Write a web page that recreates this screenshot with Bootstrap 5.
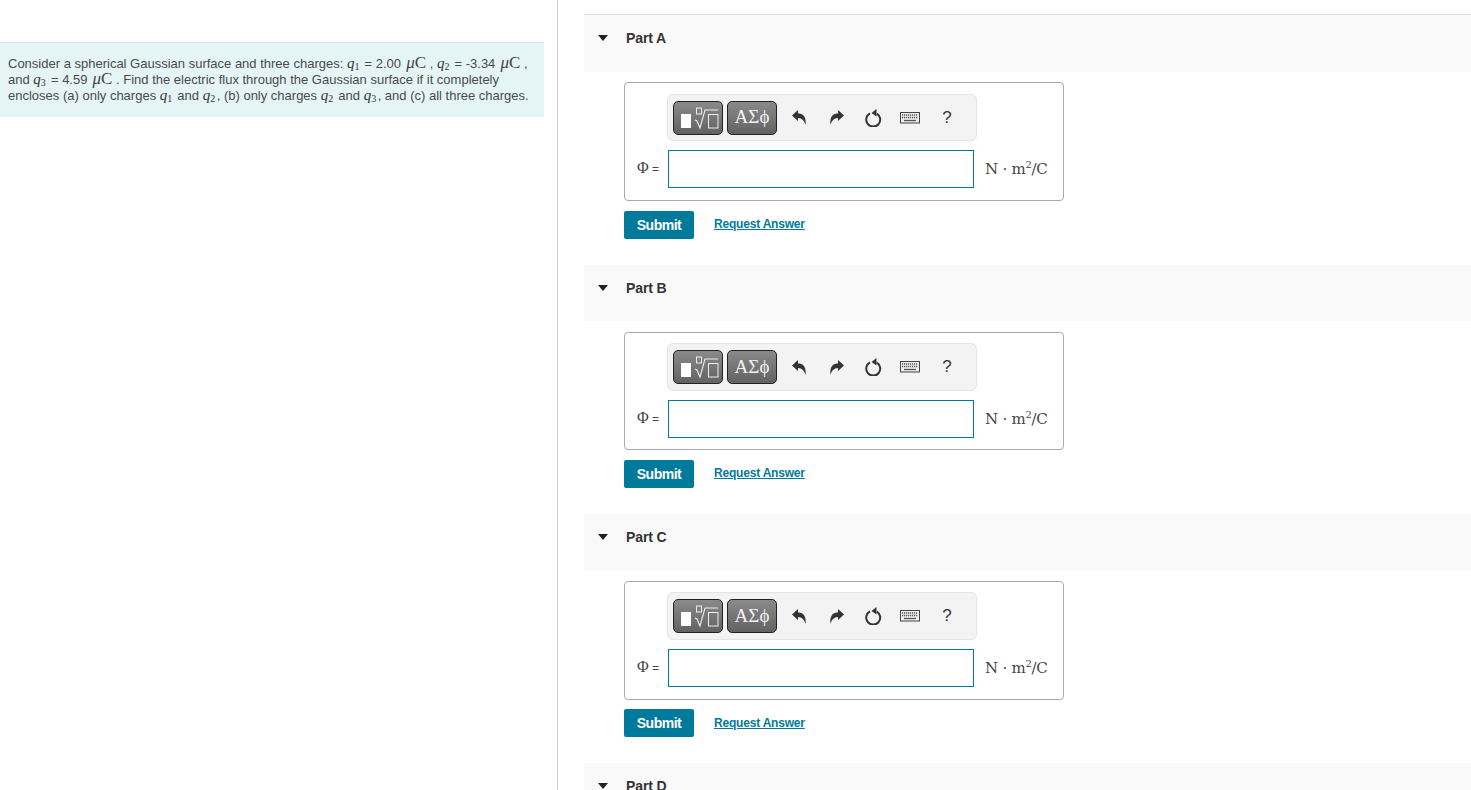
<!DOCTYPE html>
<html lang="en"><head><meta charset="utf-8"><title>Gaussian surface</title>
<link href="https://cdn.jsdelivr.net/npm/bootstrap@5.3.0/dist/css/bootstrap.min.css" rel="stylesheet">
<style>
html,body{height:790px;overflow:hidden;background:#fff}
body{font-family:"Liberation Sans",Arial,sans-serif;color:#444;font-size:12px}
.lay{height:790px}
.leftcol{width:558px;flex:none;border-right:1px solid #c6ccd0;padding-top:42px;padding-right:13px}
.prob{background:#e5f5f6;border-top:1px solid #d7e2e4;height:75px;padding:13px 0 0 8px;font-size:13px;line-height:16px;color:#4a4a4a;white-space:nowrap}
.mi{font-family:"Liberation Serif",serif;font-style:italic;font-size:15px;color:#333;line-height:0;padding-right:1.5px}
.mi sub{font-style:normal;font-size:10px;bottom:-.2em;line-height:0}
.mu{font-family:"Liberation Serif",serif;font-size:17px;color:#444;line-height:0;padding-left:1.5px}
.rightcol{flex:1;padding:14px 0 0 26px;min-width:0}
.parthd{height:56px;background:#f9f9f9;display:flex;padding:14px 0 0 14px;font-weight:700;font-size:14px;line-height:18px;color:#333;letter-spacing:-.1px}
.parthd.firsthd{height:58px;border-top:1px solid #dcdcdc;padding-top:14px}
.tri{width:0;height:0;border-left:5.5px solid transparent;border-right:5.5px solid transparent;border-top:6px solid #222;margin:6px 18px 0 0}
.ansbox{width:440px;height:118px;margin:11px 0 10px 40px;border:1px solid #aaa;border-radius:4px;padding:10px 0 0 11px}
.firsthd + .ansbox{height:119px;margin-top:10px;padding-top:11px}
.tbar{width:310px;height:48px;margin-left:31px;background:#f3f3f3;border:1px solid #e4e4e4;border-radius:6px;padding:5px 5px;display:flex;align-items:center}
.firsthd + .ansbox .tbar{height:47px}
.tpl{width:50px;height:34px;border:1px solid #222;border-radius:5px;background:linear-gradient(#8a8a8a,#626262);margin-right:4px;display:flex;align-items:center;justify-content:center;color:#f2f2f2;font-family:"Liberation Serif",serif;font-size:19px;flex:none;padding:0}
.tool{flex:none;display:flex;align-items:center;justify-content:center;height:34px;color:#333}
.tw-undo{width:35px}.tw-redo{width:42px}.tw-rot{width:30px}.tw-kb{width:44px}.tw-help{width:30px;font-size:17px}
.inrow{display:flex;align-items:center;margin-top:9px}
.philab{width:32px;font-size:12px;color:#444;white-space:nowrap;padding-left:1px}
.phi{font-family:"Liberation Serif",serif;font-size:16px;line-height:0}
.ansinp{width:306px;height:38px;border:1px solid #007a9b;background:#fff;border-radius:0;padding:0 6px;flex:none}
.unitx{font-family:"DejaVu Serif",serif;font-size:15px;color:#444;margin-left:11px;white-space:nowrap;letter-spacing:-.25px}
.unitx sup{font-size:10px;top:-.6em;line-height:0}
.actrow{margin-left:40px;display:flex;align-items:center;height:28px;margin-bottom:26px}
.subbtn{width:70px;height:28px;background:#007a9b;border:none;border-radius:2px;color:#fff;font-weight:700;font-size:14px;padding:0;letter-spacing:-.5px}
.reqlink{margin-left:20px;color:#007a9b;font-weight:700;font-size:12px;letter-spacing:-.2px;text-decoration:underline;margin-top:-2px}
section:nth-of-type(3) .ansbox{height:119px;margin-bottom:9px}
section:nth-of-type(3) .reqlink{margin-top:0}
</style></head>
<body>
<div class="d-flex lay">
<div class="leftcol"><div class="prob">
Consider a spherical Gaussian surface and three charges: <span class="mi">q<sub>1</sub></span> = 2.00 <span class="mu"><i>μ</i>C</span> , <span class="mi">q<sub>2</sub></span> = -3.34 <span class="mu"><i>μ</i>C</span> ,<br>
and <span class="mi">q<sub>3</sub></span> = 4.59 <span class="mu"><i>μ</i>C</span> . Find the electric flux through the Gaussian surface if it completely<br>
encloses (a) only charges <span class="mi">q<sub>1</sub></span> and <span class="mi">q<sub>2</sub></span>, (b) only charges <span class="mi">q<sub>2</sub></span> and <span class="mi">q<sub>3</sub></span>, and (c) all three charges.
</div></div>
<div class="rightcol" id="rc"></div>
</div>
<svg width="0" height="0" class="position-absolute"><defs>
<g id="i-undo"><path d="M0 5.500 6 0V3.500C11 3.500 14.500 6.500 13.500 15 12.500 11 10 8 6 8V11z" fill="#333"/></g>
<g id="i-redo"><path d="M14 5.500 8 0V3.500C3 3.500-.5 6.500.5 15 1.500 11 4 8 8 8V11z" fill="#333"/></g>
<g id="i-rot"><path d="M11.800 4.600A7 7 0 1 1 5 4.400" fill="none" stroke="#333" stroke-width="2"/><path d="M6.500 4 11.500 0V7.500z" fill="#333"/></g>
<g id="i-kb"><rect x=".5" y=".5" width="19" height="10.500" fill="#eee" stroke="#444"/><path d="M2 3h16M2 5.500h16" stroke="#555" stroke-width="1.300" stroke-dasharray="1.200 .8"/><path d="M4 8.500h12" stroke="#555" stroke-width="1.300"/></g>
</defs></svg>
<script>
function part(n,first){return '<section><div class="parthd'+(first?' firsthd':'')+'"><span class="tri"></span>Part '+n+'</div>'+(n==='D'?'':'<div class="ansbox"><div class="tbar"><button class="tpl" type="button" aria-label="templates"><svg width="42" height="28" viewBox="0 0 42 28"><rect x="4" y="10" width="10" height="14" fill="#fff"/><rect x="19.500" y="4" width="5" height="6" fill="none" stroke="#eee"/><path d="M18 16l2 1 3 7 5-18H41" fill="none" stroke="#eee" stroke-width="1.100"/><rect x="31.500" y="10.500" width="9.500" height="13.500" fill="none" stroke="#eee"/></svg></button><button class="tpl" type="button">ΑΣϕ</button><span class="tool tw-undo"><svg width="14" height="15" viewBox="0 0 14 15"><use href="#i-undo"/></svg></span><span class="tool tw-redo"><svg width="14" height="15" viewBox="0 0 14 15"><use href="#i-redo"/></svg></span><span class="tool tw-rot"><svg width="17" height="18" viewBox="0 0 17 18"><use href="#i-rot"/></svg></span><span class="tool tw-kb"><svg width="20" height="12" viewBox="0 0 20 12"><use href="#i-kb"/></svg></span><span class="tool tw-help">?</span></div><div class="inrow"><span class="philab"><span class="phi">Φ</span> =</span><input class="ansinp" type="text" aria-label="answer"><span class="unitx">N · m<sup>2</sup>/C</span></div></div><div class="actrow"><button class="subbtn" type="button">Submit</button><a class="reqlink" href="#">Request Answer</a></div>')+'</section>';}
document.getElementById('rc').innerHTML=part('A',true)+part('B')+part('C')+part('D');
</script>
<script src="https://cdn.jsdelivr.net/npm/bootstrap@5.3.0/dist/js/bootstrap.bundle.min.js"></script>
</body></html>
